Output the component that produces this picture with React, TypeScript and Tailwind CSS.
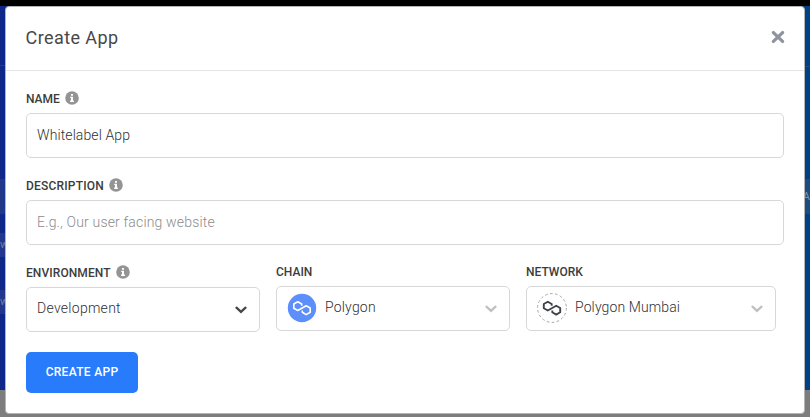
import type { ReactNode } from "react";

function InfoIcon() {
  return (
    <svg viewBox="0 0 14 14" className="h-3.5 w-3.5 shrink-0">
      <circle cx="7" cy="7" r="6.8" fill="#949494" />
      <path d="M6 2.9h2v1.9H6zM5.2 5.7H8v3.9h.9v1.3H5.1V9.6H6V7h-.8z" fill="#fff" />
    </svg>
  );
}

function Chevron({ className }: { className: string }) {
  return (
    <svg viewBox="0 0 12 8" className={`h-2 w-3 shrink-0 ${className}`}>
      <path d="M1.5 1.7 6 5.9l4.5-4.2" fill="none" stroke="currentColor" strokeWidth="2.3" strokeLinecap="round" />
    </svg>
  );
}

function PolygonMark({ width }: { width: number }) {
  return (
    <path
      d="M14.7 12.7V11L10.8 8.7 6.8 11v4.2l4 2.3 8.4-4.8 4 2.3v4.3l-4 2.3-3.9-2.3v-1.8"
      fill="none"
      stroke="currentColor"
      strokeWidth={width}
      strokeLinejoin="round"
    />
  );
}

function Label({ children, info, spacing }: { children: ReactNode; info?: boolean; spacing: string }) {
  return (
    <div className="flex h-3.5 items-center gap-[5px]">
      <span className={`mt-px text-[12px] leading-[14px] font-medium text-[#3c3c3c] ${spacing}`}>{children}</span>
      {info && <InfoIcon />}
    </div>
  );
}

function Backdrop() {
  return (
    <div className="flex h-[417px] flex-col">
      <div className="h-1.5 bg-black" />
      <div className="flex h-96 justify-between">
        <div className="flex w-1/2 flex-col overflow-hidden bg-[#10278a] text-[11px] text-[#77809c]">
          <div className="h-[60px] border-b border-[#28388b]" />
          <div className="mt-[113px] h-[35px] bg-[#20378a]" />
          <div className="mt-[19px] h-6 bg-[#22378d] leading-6">w</div>
          <div className="mt-[33px] h-6 bg-[#22378d] leading-6">w</div>
        </div>
        <div className="flex w-1/2 flex-col overflow-hidden bg-[#004084] text-right text-[11px] text-[#8292a4]">
          <div className="h-[61px] border-b border-[#204c80]" />
          <div className="mt-[112px] h-[35px] bg-[#1d4d80] leading-[35px]">A</div>
        </div>
      </div>
      <div className="flex-1 bg-[#7d7d7d]" />
    </div>
  );
}

export default function App() {
  return (
    <div className="relative h-[417px] w-[810px] overflow-hidden font-['Roboto',sans-serif]">
      <Backdrop />
      <div className="absolute top-1.5 left-[5px] flex h-[408px] w-[800px] flex-col rounded-[4px] border border-[#b5b5b8] bg-white">
        <header className="flex h-16 items-center justify-between border-b border-[#e4e4e9] px-5 pb-0.5">
          <h1 className="-ml-[0.5px] text-[18px] leading-6 tracking-[0.42px] text-[#484848]">Create App</h1>
          <svg viewBox="0 0 14 14" className="-mt-0.5 -mr-[0.5px] h-3.5 w-3.5">
            <path d="m2.4 2.6 9.2 8.8m0-8.8-9.2 8.8" stroke="#8e949e" strokeWidth="3.3" strokeLinecap="round" />
          </svg>
        </header>
        <form className="flex flex-col px-5 pt-5" onSubmit={(e) => e.preventDefault()}>
          <Label info spacing="tracking-[0px]">NAME</Label>
          <input
            defaultValue="Whitelabel App"
            className="mt-2 h-[45px] rounded-[5px] border border-[#d8d8d8] px-2.5 pb-0.5 text-[14px] font-light tracking-[0.1px] text-[#303030] outline-none"
          />
          <div className="mt-5">
            <Label info spacing="tracking-[0.2px]">DESCRIPTION</Label>
          </div>
          <input
            placeholder="E.g., Our user facing website"
            className="mt-2 h-[45px] rounded-[5px] border border-[#d8d8d8] px-2.5 pb-0.5 text-[14px] font-light tracking-[0.17px] outline-none placeholder:text-[#8c8c8c]"
          />
          <div className="mt-5 flex items-start gap-4">
            <div className="flex w-[234px] flex-col gap-2">
              <Label info spacing="tracking-[0.08px]">ENVIRONMENT</Label>
              <div className="flex h-[45px] items-center justify-between rounded-[5px] border border-[#d8d8d8] pr-3 pb-[3px] pl-2.5">
                <span className="text-[14px] font-light tracking-[0.28px] text-[#303030]">Development</span>
                <Chevron className="mt-1 text-[#484848]" />
              </div>
            </div>
            <div className="-mt-px flex w-[234px] flex-col gap-2">
              <Label spacing="tracking-[0px]">CHAIN</Label>
              <div className="flex h-[45px] items-center rounded-[5px] border border-[#d8d8d8] pr-3 pl-2.5">
                <svg viewBox="0 0 30 30" className="mb-0.5 h-[30px] w-[30px] text-white">
                  <circle cx="15" cy="15" r="14.2" fill="#5c8ffb" />
                  <PolygonMark width={1.6} />
                </svg>
                <span className="mb-[3px] ml-2 flex-1 text-[14px] font-light tracking-[0.2px] text-[#303030]">Polygon</span>
                <Chevron className="text-[#c0c0c0]" />
              </div>
            </div>
            <div className="-mt-px flex w-[250px] flex-col gap-2">
              <Label spacing="tracking-[0px]">NETWORK</Label>
              <div className="flex h-[45px] items-center rounded-[5px] border border-[#d8d8d8] pr-3 pl-2.5">
                <svg viewBox="0 0 30 30" className="mb-0.5 h-[30px] w-[30px] text-[#40434b]">
                  <circle cx="15" cy="15" r="14.4" fill="none" stroke="#a6a6a6" strokeWidth="1" strokeDasharray="2.7 2.33" />
                  <PolygonMark width={1.9} />
                </svg>
                <span className="mb-[3px] ml-2 flex-1 text-[14px] font-light tracking-[0.12px] text-[#303030]">Polygon Mumbai</span>
                <Chevron className="text-[#c0c0c0]" />
              </div>
            </div>
          </div>
          <button className="mt-5 h-[41px] w-28 rounded-[5px] bg-[#287cfb] pb-0.5 text-[12px] font-medium tracking-[0.3px] whitespace-nowrap text-white">
            CREATE APP
          </button>
        </form>
      </div>
    </div>
  );
}
